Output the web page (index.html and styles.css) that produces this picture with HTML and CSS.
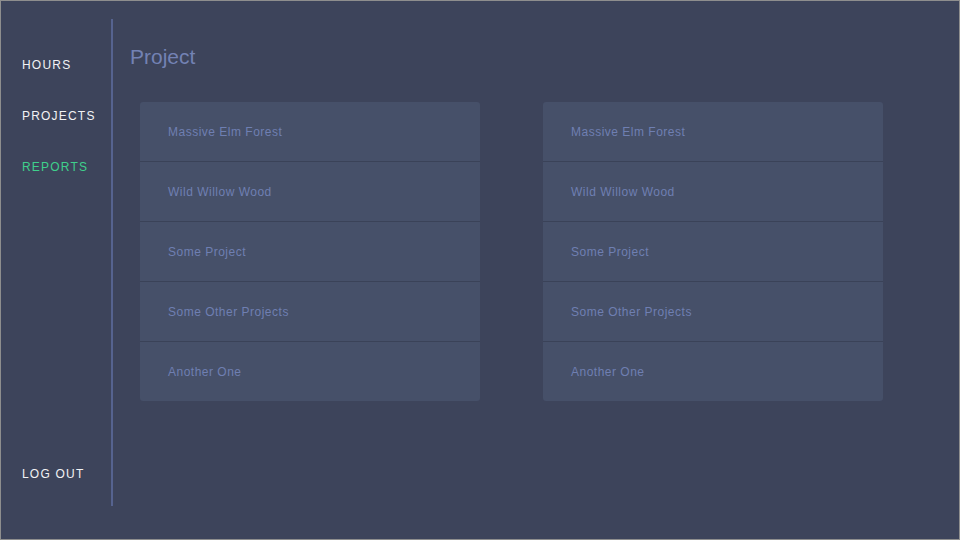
FILE: index.html
```html
<!DOCTYPE html>
<html lang="en">
<head>
<meta charset="utf-8">
<title>Project</title>
<link rel="stylesheet" href="styles.css">
</head>
<body>
<div class="app">
  <nav class="sidebar">
    <ul class="nav-list">
      <li class="nav-item">HOURS</li>
      <li class="nav-item">PROJECTS</li>
      <li class="nav-item active">REPORTS</li>
    </ul>
    <div class="nav-item logout">LOG OUT</div>
  </nav>
  <main class="main">
    <h1 class="title">Project</h1>
    <div class="cards">
      <ul class="card">
        <li class="row">Massive Elm Forest</li>
        <li class="row">Wild Willow Wood</li>
        <li class="row">Some Project</li>
        <li class="row">Some Other Projects</li>
        <li class="row">Another One</li>
      </ul>
      <ul class="card">
        <li class="row">Massive Elm Forest</li>
        <li class="row">Wild Willow Wood</li>
        <li class="row">Some Project</li>
        <li class="row">Some Other Projects</li>
        <li class="row">Another One</li>
      </ul>
    </div>
  </main>
</div>
</body>
</html>
```
FILE: styles.css
```css
* { box-sizing: border-box; }
html, body { margin: 0; padding: 0; }
body {
  width: 960px;
  height: 540px;
  background: #3d445b;
  font-family: "Liberation Sans", Arial, sans-serif;
  overflow: hidden;
}
.app {
  width: 960px;
  height: 540px;
  border: 1px solid #8e8e8e;
  display: flex;
  padding: 18px 0 33px 0;
}
.sidebar {
  width: 112px;
  flex: none;
  border-right: 2px solid #56638f;
  display: flex;
  flex-direction: column;
  justify-content: space-between;
  padding: 39px 0 24px 21px;
}
.nav-list {
  list-style: none;
  margin: 0;
  padding: 0;
  display: flex;
  flex-direction: column;
  gap: 36px;
}
.nav-item {
  font-size: 12px;
  line-height: 15px;
  letter-spacing: 1.2px;
  color: #f2f2f4;
}
.nav-item.active { color: #3fd08c; }
.main {
  flex: 1;
  padding: 26px 0 0 17px;
}
.title {
  margin: 0;
  font-size: 21px;
  line-height: 24px;
  font-weight: normal;
  color: #7382b4;
}
.cards {
  display: flex;
  gap: 63px;
  margin-top: 33px;
  padding-left: 10px;
}
.card {
  list-style: none;
  margin: 0;
  padding: 0;
  width: 340px;
  background: #465069;
  border-radius: 3px;
}
.row {
  height: 60px;
  display: flex;
  align-items: center;
  padding: 1px 0 0 28px;
  border-bottom: 1px solid #3a4258;
  font-size: 12px;
  line-height: 14px;
  letter-spacing: 0.5px;
  color: #6f7fb2;
}
.row:nth-child(n+4) { padding-top: 0; }
.row:last-child {
  border-bottom: none;
  height: 59px;
}
```
